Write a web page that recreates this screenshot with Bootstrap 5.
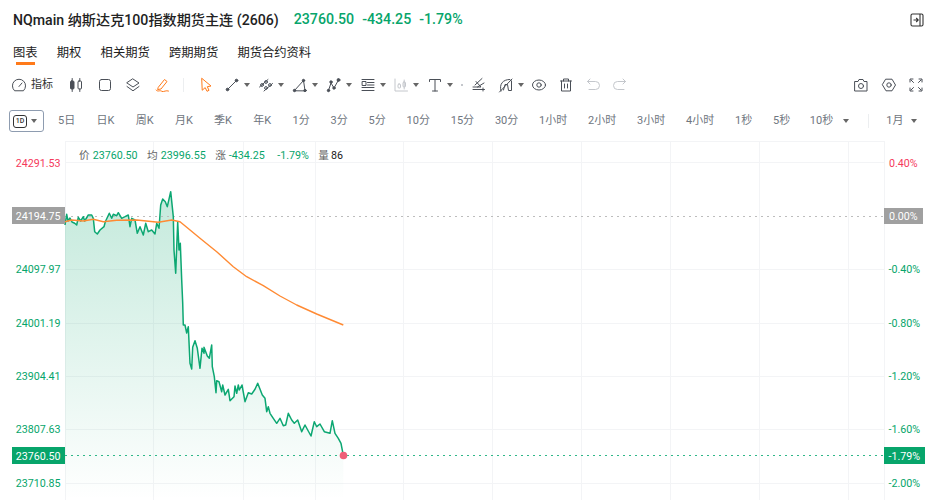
<!DOCTYPE html>
<html lang="zh-CN">
<head>
  <meta charset="UTF-8" />
  <meta name="viewport" content="width=device-width, initial-scale=1.0"/>
  <title>NQmain 分时图</title>
  <link href="https://cdn.jsdelivr.net/npm/bootstrap@5.3.0/dist/css/bootstrap.min.css" rel="stylesheet"/>
  <style>
    :root {
      --up-green: #07a56b;
      --down-red: #f5395c;
      --accent: #ff7a1a;
      --ink: #222;
      --muted: #6f7680;
    }

    body {
      width: 937px;
      height: 500px;
      overflow: hidden;
      background: #fff;
      color: var(--ink);
      font-family: Roboto, "Noto Sans CJK SC", sans-serif;
    }

    svg { display: block; flex: none; }

    .top-bar { height: 40px; padding: 0 13px; }
    .top-bar h1 { font-size: 14.15px; font-weight: 500; margin: 0; }
    .quote { color: var(--up-green); font-size: 14.2px; font-weight: 500; gap: 8px; margin-left: 15px; }

    .tab-row { height: 26px; padding-left: 13px; gap: 19.2px; font-size: 12.3px; line-height: 26px; }
    .tab-on { position: relative; }
    .tab-on::after {
      content: "";
      position: absolute;
      left: 3px;
      right: 3px;
      bottom: 1px;
      height: 3px;
      background: var(--accent);
    }

    .tool-row { height: 30px; margin-top: 4px; padding: 0 13px 0 11px; font-size: 11px; }
    .tool-row svg { fill: none; stroke: #4a4f57; stroke-width: 1; stroke-linejoin: round; stroke-linecap: round; }
    .tool-row svg.hot { stroke: var(--accent); }
    .tool-row svg.dim { stroke: #c4c7cc; }
    .tool-label { margin: 0 15px 0 4px; color: #333; }
    .slot-a { width: 28.6px; }
    .slot-b { width: 26.7px; }
    .slot-c { width: 27.5px; }
    .slot-d { width: 26px; }
    .tool-drop { width: 33.8px; gap: 4px; }
    .tool-sep { width: 1px; height: 14px; background: #eceef0; margin: 0 14px 0 1px; }
    .tool-dot { width: 2px; height: 2px; background: #c4c7cc; margin: 0 8px 0 0; }
    .tri { width: 0; height: 0; flex: none; border-left: 3px solid transparent; border-right: 3px solid transparent; border-top: 4px solid #666; }

    .period-row { height: 32px; margin-top: 5px; padding-left: 9px; font-size: 11px; color: var(--muted); white-space: nowrap; }
    .period-box {
      flex: none;
      width: 35px;
      height: 22px;
      margin-right: 14px;
      gap: 4px;
      border: 1px solid #8e9cb0;
      border-radius: 3px;
      padding-left: 3px;
    }
    .d-chip {
      width: 14px;
      height: 13px;
      border: 1px solid #333;
      border-radius: 3px;
      font-size: 7px;
      line-height: 11px;
      text-align: center;
      color: #333;
      font-weight: 500;
    }
    .period-k { gap: 21.3px; margin-right: 21.4px; }
    .period-list { gap: 20.8px; margin-right: 19.7px; }
    .period-end { gap: 9.500px; }
    .period-sep { width: 1px; height: 14px; background: #eceef0; margin: 0 17.500px 0 19px; }
    .period-month { gap: 8px; }

    .chart-area { position: relative; height: 359px; margin-top: 4px; }
    .stat-line {
      position: absolute;
      left: 79px;
      top: 8px;
      font-size: 10.7px;
      line-height: 14px;
      color: #666;
      white-space: nowrap;
    }
    .stat-line b { font-weight: 400; color: var(--up-green); margin: 0 9.500px 0 3px; }
    .stat-line i { font-style: normal; color: #222; margin-left: 2px; }

    .grid-line { stroke: #f3f4f6; stroke-width: 1; }
    .axis-text { font-size: 10.7px; font-family: Roboto, sans-serif; }
  </style>
</head>
<body>
  <div class="top-bar d-flex align-items-center">
    <h1>NQmain 纳斯达克100指数期货主连 (2606)</h1>
    <div class="quote d-flex"><span>23760.50</span><span>-434.25</span><span>-1.79%</span></div>
    <svg class="ms-auto" width="14" height="14" viewBox="0 0 14 14" fill="none" stroke="#333" stroke-width="1.1">
      <rect x="1" y="1" width="12" height="12" rx="1.5"/>
      <path d="M10 1V13M3.5 7H8M6.2 5L8.2 7L6.2 9"/>
    </svg>
  </div>

  <div class="tab-row d-flex">
    <span class="tab-on">图表</span><span>期权</span><span>相关期货</span><span>跨期期货</span><span>期货合约资料</span>
  </div>

  <div class="tool-row d-flex align-items-center">
    <svg width="16" height="16" viewBox="0 0 16 16"><path d="M3.3 13.5A6.6 6.6 0 1 1 12.7 13.5Z"/><path d="M8 9.5L11 6"/></svg>
    <span class="tool-label">指标</span>
    <div class="slot-a"><svg width="16" height="16" viewBox="0 0 16 16"><rect x="2.5" y="4" width="3.5" height="8" rx="1" fill="#4a4f57"/><path d="M4.2 1.5V14.5M11.8 1.5V4M11.8 12V14.5"/><rect x="10" y="4" width="3.5" height="8" rx="1"/></svg></div>
    <div class="slot-a"><svg width="16" height="16" viewBox="0 0 16 16"><rect x="2.5" y="2.5" width="11" height="11" rx="2"/></svg></div>
    <div class="slot-a"><svg width="16" height="16" viewBox="0 0 16 16"><path d="M8 2L14 6L8 10L2 6Z"/><path d="M2 9.5L8 13.8L14 9.5"/></svg></div>
    <div class="slot-a"><svg class="hot" width="16" height="16" viewBox="0 0 16 16"><path d="M4.5 10L10.5 2.5L13 4.5L7 12L4 12.5Z"/><path d="M2 13C4 15.5 6 12.5 8 14.5C10 15 12 13 14.5 14"/></svg></div>
    <div class="tool-sep"></div>
    <div class="slot-d"><svg class="hot" width="16" height="16" viewBox="0 0 16 16"><path d="M4 1.5L13 9L9.3 9.7L11 13.3L9 14.3L7.2 10.6L4.5 13Z"/></svg></div>
    <div class="tool-drop d-flex align-items-center"><svg width="16" height="16" viewBox="0 0 16 16"><circle cx="3.5" cy="12.5" r="1.300" fill="#4a4f57"/><circle cx="12.5" cy="3.5" r="1.300" fill="#4a4f57"/><path d="M3.5 12.5L12.5 3.5"/></svg><span class="tri"></span></div>
    <div class="tool-drop d-flex align-items-center"><svg width="16" height="16" viewBox="0 0 16 16"><path d="M1.5 10L10 2.5M6 14L14.5 6.5"/><circle cx="4" cy="8" r="1.400"/><circle cx="12" cy="8" r="1.400"/><circle cx="8" cy="11" r="1.400"/><circle cx="8" cy="5" r="1.400"/></svg><span class="tri"></span></div>
    <div class="tool-drop d-flex align-items-center"><svg width="16" height="16" viewBox="0 0 16 16"><path d="M2.5 13.5L11.5 3.5L13 13.5Z"/><circle cx="2.5" cy="13.5" r="1.200" fill="#4a4f57"/><circle cx="11.5" cy="3.5" r="1.200" fill="#4a4f57"/><circle cx="13" cy="13.5" r="1.200" fill="#4a4f57"/></svg><span class="tri"></span></div>
    <div class="tool-drop d-flex align-items-center"><svg width="16" height="16" viewBox="0 0 16 16"><path d="M2.5 13.5L5 6L8 11L12.5 3"/><circle cx="2.5" cy="13.5" r="1.200" fill="#4a4f57"/><circle cx="5" cy="5" r="1.200" fill="#4a4f57"/><circle cx="8" cy="11" r="1.200" fill="#4a4f57"/><circle cx="12.5" cy="3" r="1.400" fill="#4a4f57"/></svg><span class="tri"></span></div>
    <div class="tool-drop d-flex align-items-center"><svg width="16" height="16" viewBox="0 0 16 16"><path d="M2 2.5H14M7.5 5.5H14M7.5 8H14M2 10.5H14M2 13.5H14"/><rect x="2.5" y="4.5" width="3.5" height="4"/></svg><span class="tri"></span></div>
    <div class="tool-drop d-flex align-items-center"><svg class="dim" width="16" height="16" viewBox="0 0 16 16"><path d="M2 2V14H14.5"/><rect x="5" y="7" width="2.5" height="4" rx="1"/><rect x="10" y="5" width="2.5" height="5" rx="1"/><path d="M11.2 3V12"/></svg><span class="tri"></span></div>
    <div class="tool-drop d-flex align-items-center"><svg width="16" height="16" viewBox="0 0 16 16"><path d="M2.5 4.5V2.5H13.5V4.5M8 2.5V14M5.5 14H10.5"/></svg><span class="tri"></span></div>
    <div class="tool-dot"></div>
    <div class="slot-b"><svg width="16" height="16" viewBox="0 0 16 16"><path d="M11 1.5L4 8M5 4.5L10 10H2M13 6L6.5 10"/><path d="M2 12.5H13.5M12 11V14"/></svg></div>
    <div class="tool-drop d-flex align-items-center"><svg width="16" height="16" viewBox="0 0 16 16"><path d="M3 14C1 7 5 2.5 12 2.5L13.5 4V13.5H10.5L9.5 7.5H7L5.5 13"/><path d="M1.5 15L14 2"/></svg><span class="tri"></span></div>
    <div class="slot-b"><svg width="16" height="16" viewBox="0 0 16 16"><ellipse cx="8" cy="8" rx="6.5" ry="5"/><circle cx="8" cy="8" r="2.2"/></svg></div>
    <div class="slot-b"><svg width="16" height="16" viewBox="0 0 16 16"><path d="M2.5 4H13.5M5.5 4V2H10.5V4"/><path d="M3.5 4V14H12.5V4M6.5 7V11M9.5 7V11"/></svg></div>
    <div class="slot-b"><svg class="dim" width="16" height="16" viewBox="0 0 16 16"><path d="M5 2L2.5 4.5L5 7M2.5 4.5H10.5A4 4 0 0 1 10.5 12.5H4"/></svg></div>
    <div class="slot-b"><svg class="dim" width="16" height="16" viewBox="0 0 16 16"><path d="M11 2L13.5 4.5L11 7M13.5 4.5H5.5A4 4 0 0 0 5.5 12.5H12"/></svg></div>
    <div class="ms-auto d-flex">
      <div class="slot-c"><svg width="16" height="16" viewBox="0 0 16 16"><path d="M2 4.5H5L6 2.5H10L11 4.5H14V14H2Z"/><circle cx="8" cy="9" r="2.5"/></svg></div>
      <div class="slot-c"><svg width="16" height="16" viewBox="0 0 16 16"><path d="M5 2.2H11L14.5 8L11 13.8H5L1.5 8Z"/><circle cx="8" cy="8" r="2.2"/></svg></div>
      <svg width="16" height="16" viewBox="0 0 16 16"><path d="M2 5V2H5M11 2H14V5M14 11V14H11M5 14H2V11M3 3L5.5 5.5M13 3L10.5 5.5M13 13L10.5 10.5M3 13L5.5 10.5"/></svg>
    </div>
  </div>

  <div class="period-row d-flex align-items-center">
    <div class="period-box d-flex align-items-center"><span class="d-chip">1D</span><span class="tri"></span></div>
    <div class="period-k d-flex">
      <span>5日</span><span>日K</span><span>周K</span><span>月K</span><span>季K</span><span>年K</span>
    </div>
    <div class="period-list d-flex">
      <span>1分</span><span>3分</span><span>5分</span><span>10分</span><span>15分</span><span>30分</span><span>1小时</span><span>2小时</span><span>3小时</span><span>4小时</span><span>1秒</span><span>5秒</span>
    </div>
    <div class="period-end d-flex align-items-center"><span>10秒</span><span class="tri"></span></div>
    <div class="period-sep"></div>
    <div class="period-month d-flex align-items-center"><span>1月</span><span class="tri"></span></div>
  </div>

  <div class="chart-area">
    <svg width="937" height="359" viewBox="0 141 937 359">
      <defs>
        <linearGradient id="areaFill" x1="0" y1="190" x2="0" y2="500" gradientUnits="userSpaceOnUse">
          <stop offset="0" stop-color="#07a56b" stop-opacity=".24"/>
          <stop offset="1" stop-color="#07a56b" stop-opacity="0"/>
        </linearGradient>
      </defs>

      <g class="grid-line">
        <path d="M65 141.500H884M65 162.500H884M65 269.500H884M65 323.500H884M65 376.500H884M65 429.500H884M65 483.500H884"/>
        <path d="M65.500 141V500M153.500 141V500M243.500 141V500M315.500 141V500M403.500 141V500M492.500 141V500M581.500 141V500M670.500 141V500M759.500 141V500M848.500 141V500M884.500 141V500"/>
      </g>

      <polygon fill="url(#areaFill)" points="65,500 65,225 66.700,214.300 68,221 70,218 72,222 74.700,223.300 76.700,225 78.300,217.300 80.700,221 83.300,216.700 84.700,221 88.300,215 91.700,215 93.300,218.300 94.700,231.700 97.300,234 100,230 104,226.700 105.300,221.700 109.300,213.300 111.700,218.300 113.300,214.300 116.700,215.700 118.300,212.700 121.700,218.300 125,216.700 128.300,215 130,226.700 131.700,218.300 135,220 137.300,233.300 140,226.700 143.300,235 145.700,223.300 148.300,231.700 151.700,230 155,234 156.700,223.300 159,228.300 160.700,205 162.700,199 165.300,201.700 167.300,206.700 170.700,191.700 173.300,216.700 174,250 175.700,273.300 177.700,221.700 179,250 180.300,243.300 181.700,280 182.700,303 183.300,325 185,325 186.700,333 188.300,326.700 190,363.300 191.700,369 192.700,347.300 195,340.700 197.300,348.300 200,368.300 202,348.300 204,353.300 204,347.300 207.300,356 209.300,358.300 211.700,345 212.300,366.700 214.300,376.700 216,392.700 216.700,380.700 219,381.700 221.700,391.700 222.700,385 225,395 228.300,389.300 230,400.700 234,396.700 235,386 236.700,393.300 238.300,385 239.300,390 242,385 245,401.700 248.300,392.700 251.700,394 255,389.300 257.700,383.300 262.300,395 265,398.300 266.700,411.700 268.300,406.700 270,413.300 273.300,418.300 276.700,423.300 280,418.300 283.300,425.700 285.700,425 288.300,413.300 291.700,420 294.300,423.300 297.700,420 301.700,431.700 305,425 307.700,430 311,436 314.300,421.700 316.700,426.700 320,424 324.300,431.700 330,433.300 332.300,420.700 335,433.300 338.300,438.300 341,443.300 343.300,455.300 343.300,500"/>

      <path d="M65 216.500H884" fill="none" stroke="#bdbdbd" stroke-dasharray="2 4"/>
      <path d="M65 455.500H884" fill="none" stroke="#2fb889" stroke-dasharray="2 4"/>

      <polyline fill="none" stroke="#0ca772" stroke-width="1.500" stroke-linejoin="round" points="65,225 66.700,214.300 68,221 70,218 72,222 74.700,223.300 76.700,225 78.300,217.300 80.700,221 83.300,216.700 84.700,221 88.300,215 91.700,215 93.300,218.300 94.700,231.700 97.300,234 100,230 104,226.700 105.300,221.700 109.300,213.300 111.700,218.300 113.300,214.300 116.700,215.700 118.300,212.700 121.700,218.300 125,216.700 128.300,215 130,226.700 131.700,218.300 135,220 137.300,233.300 140,226.700 143.300,235 145.700,223.300 148.300,231.700 151.700,230 155,234 156.700,223.300 159,228.300 160.700,205 162.700,199 165.300,201.700 167.300,206.700 170.700,191.700 173.300,216.700 174,250 175.700,273.300 177.700,221.700 179,250 180.300,243.300 181.700,280 182.700,303 183.300,325 185,325 186.700,333 188.300,326.700 190,363.300 191.700,369 192.700,347.300 195,340.700 197.300,348.300 200,368.300 202,348.300 204,353.300 204,347.300 207.300,356 209.300,358.300 211.700,345 212.300,366.700 214.300,376.700 216,392.700 216.700,380.700 219,381.700 221.700,391.700 222.700,385 225,395 228.300,389.300 230,400.700 234,396.700 235,386 236.700,393.300 238.300,385 239.300,390 242,385 245,401.700 248.300,392.700 251.700,394 255,389.300 257.700,383.300 262.300,395 265,398.300 266.700,411.700 268.300,406.700 270,413.300 273.300,418.300 276.700,423.300 280,418.300 283.300,425.700 285.700,425 288.300,413.300 291.700,420 294.300,423.300 297.700,420 301.700,431.700 305,425 307.700,430 311,436 314.300,421.700 316.700,426.700 320,424 324.300,431.700 330,433.300 332.300,420.700 335,433.300 338.300,438.300 341,443.300 343.300,455.300"/>

      <polyline fill="none" stroke="#ff8a33" stroke-width="1.400" stroke-linejoin="round" points="65,221.700 71.700,220 83.300,221 93.300,219.300 103.300,221.700 116.700,220.300 136.700,220 158.300,222.300 171.700,220 180,221.700 186.700,227.300 200,238.300 216.700,251.700 233.300,266.700 246.700,276.700 263.300,285.700 280,296 296.700,305 316.700,314 343.300,325"/>

      <circle cx="343.500" cy="455.500" r="3.800" fill="#ef5f78"/>

      <rect x="12" y="207" width="53" height="17" fill="#a0a0a0"/>
      <rect x="12" y="447" width="53" height="17" fill="#07a56b"/>
      <rect x="884" y="208" width="39" height="16" fill="#a0a0a0"/>
      <rect x="884" y="447" width="41" height="17" fill="#07a56b"/>

      <g class="axis-text" text-anchor="end" fill="#07a56b">
        <text x="60.500" y="167" fill="#f5395c">24291.53</text>
        <text x="60.500" y="220" fill="#fff">24194.75</text>
        <text x="60.500" y="273">24097.97</text>
        <text x="60.500" y="327">24001.19</text>
        <text x="60.500" y="380">23904.41</text>
        <text x="60.500" y="433">23807.63</text>
        <text x="60.500" y="460" fill="#fff">23760.50</text>
        <text x="60.500" y="487">23710.85</text>
      </g>
      <g class="axis-text" fill="#07a56b">
        <text x="889" y="167" fill="#f5395c">0.40%</text>
        <text x="889" y="220" fill="#fff">0.00%</text>
        <text x="888.500" y="273">-0.40%</text>
        <text x="888.500" y="327">-0.80%</text>
        <text x="888.500" y="380">-1.20%</text>
        <text x="888.500" y="433">-1.60%</text>
        <text x="888.500" y="460" fill="#fff">-1.79%</text>
        <text x="888.500" y="487">-2.00%</text>
      </g>
    </svg>
    <div class="stat-line">价<b>23760.50</b>均<b>23996.55</b>涨<b>-434.25</b><b>-1.79%</b>量<i>86</i></div>
  </div>
</body>
</html>
